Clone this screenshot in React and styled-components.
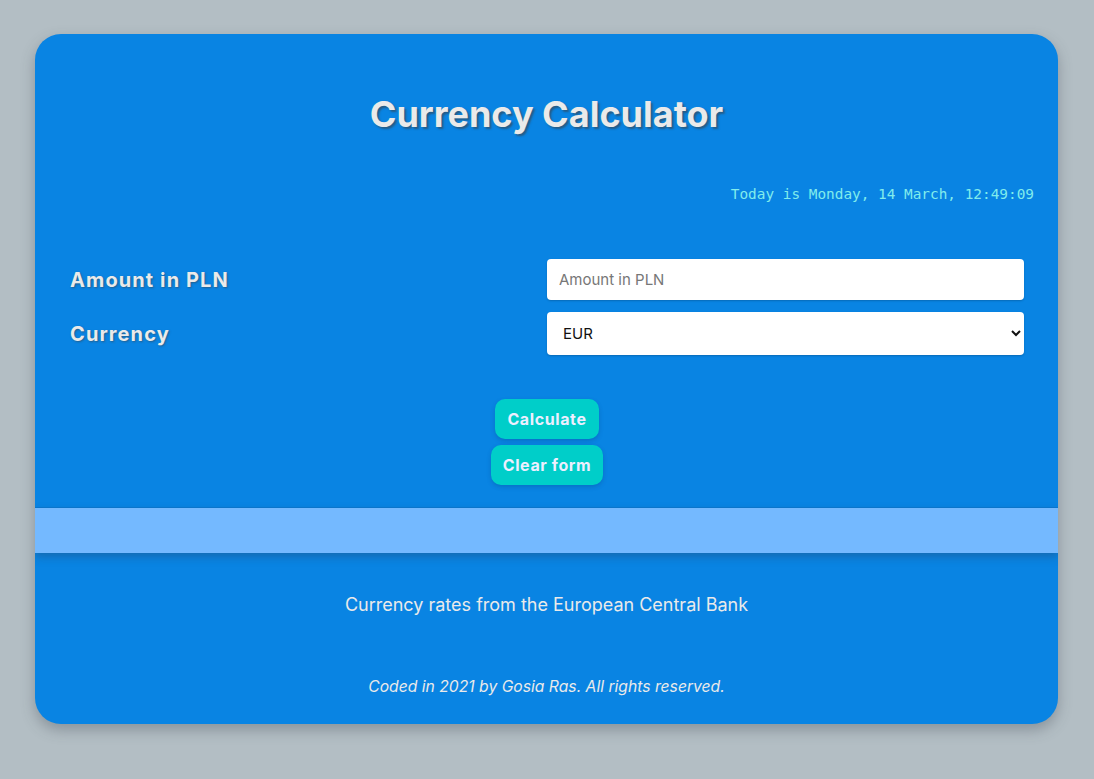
import React from "react";
import styled, { createGlobalStyle } from "styled-components";

const Global = createGlobalStyle`
  html, body { margin: 0; padding: 0; }
  body {
    background: #b3bec4;
    font-family: Inter, "Noto Sans", sans-serif;
  }
`;

const Page = styled.div`
  padding: 34px 1px 55px 0;
  display: flex;
  justify-content: center;
`;

const Card = styled.main`
  width: 1023px;
  height: 690px;
  background: #0984e3;
  border-radius: 26px;
  box-shadow: 0 6px 14px rgba(60, 70, 80, 0.35);
  display: flex;
  flex-direction: column;
  overflow: hidden;
  color: #eeeeee;
`;

const Title = styled.h1`
  margin: 58px 0 0;
  text-align: center;
  font-size: 36px;
  font-weight: 700;
  line-height: 44px;
  color: #eaeaea;
  text-shadow: 2px 2px 2px rgba(60, 60, 60, 0.55);
`;

const DateLine = styled.p`
  margin: 49px 24px 0 0;
  text-align: right;
  font-family: "DejaVu Sans Mono", "Liberation Mono", monospace;
  font-size: 14.4px;
  line-height: 18px;
  color: #81ecec;
`;

const Form = styled.form`
  display: flex;
  flex-direction: column;
  padding: 56px 34px 0 35px;
`;

const Row = styled.label`
  display: grid;
  grid-template-columns: 1fr 1fr;
  align-items: center;
  margin-bottom: ${(p) => p.$gap}px;
`;

const LabelText = styled.span`
  font-size: 20px;
  font-weight: 700;
  letter-spacing: 1.1px;
  color: #eaeaea;
  text-shadow: 1px 1px 2px rgba(60, 60, 60, 0.5);
`;

const Input = styled.input`
  box-sizing: border-box;
  height: ${(p) => p.$h}px;
  width: 100%;
  border: none;
  border-radius: 4px;
  padding: 0 12px;
  font-family: Inter, "Noto Sans", sans-serif;
  font-size: 15px;
  color: #222;
  background: #fff;
  box-shadow: 0 1px 2px rgba(0, 0, 0, 0.2);
  &::placeholder { color: #777; }
`;

const Select = styled.select`
  box-sizing: border-box;
  height: 43px;
  width: 100%;
  border: none;
  border-radius: 4px;
  padding: 0 12px;
  font-family: Inter, "Noto Sans", sans-serif;
  font-size: 15px;
  color: #111;
  background: #fff;
  box-shadow: 0 1px 2px rgba(0, 0, 0, 0.2);
`;

const Buttons = styled.div`
  display: flex;
  flex-direction: column;
  align-items: center;
  gap: 6px;
  margin-top: 44px;
`;

const Button = styled.button`
  height: 40px;
  padding: 0 12px;
  border: none;
  border-radius: 10px;
  background: #00cec9;
  color: #eef;
  font-family: Inter, "Noto Sans", sans-serif;
  font-size: 16px;
  font-weight: 700;
  letter-spacing: 0.6px;
  box-shadow: 0 2px 4px rgba(0, 60, 120, 0.25);
  cursor: pointer;
`;

const ResultBar = styled.div`
  margin-top: 23px;
  height: 45px;
  background: #74b9ff;
  box-shadow: 0 4px 8px rgba(40, 60, 90, 0.35), 0 -1px 0 #0a78d0;
`;

const Footer = styled.footer`
  display: flex;
  flex-direction: column;
  align-items: center;
  padding-top: 41px;
`;

const Source = styled.p`
  margin: 0;
  font-size: 18px;
  line-height: 22px;
  color: #eaeaea;
`;

const Copy = styled.p`
  margin: 61px 0 0;
  font-size: 15.7px;
  line-height: 20px;
  font-style: italic;
  color: #eaeaea;
`;

export default function App() {
  return (
    <>
      <Global />
      <Page>
        <Card>
          <Title>Currency Calculator</Title>
          <DateLine>Today is Monday, 14 March, 12:49:09</DateLine>
          <Form onSubmit={(e) => e.preventDefault()}>
            <Row $gap={12}>
              <LabelText>Amount in PLN</LabelText>
              <Input $h={41} type="number" placeholder="Amount in PLN" />
            </Row>
            <Row $gap={0}>
              <LabelText>Currency</LabelText>
              <Select defaultValue="EUR">
                <option value="EUR">EUR</option>
                <option value="USD">USD</option>
                <option value="GBP">GBP</option>
                <option value="CHF">CHF</option>
              </Select>
            </Row>
            <Buttons>
              <Button type="submit">Calculate</Button>
              <Button type="reset">Clear form</Button>
            </Buttons>
          </Form>
          <ResultBar />
          <Footer>
            <Source>Currency rates from the European Central Bank</Source>
            <Copy>Coded in 2021 by Gosia Ras. All rights reserved.</Copy>
          </Footer>
        </Card>
      </Page>
    </>
  );
}
